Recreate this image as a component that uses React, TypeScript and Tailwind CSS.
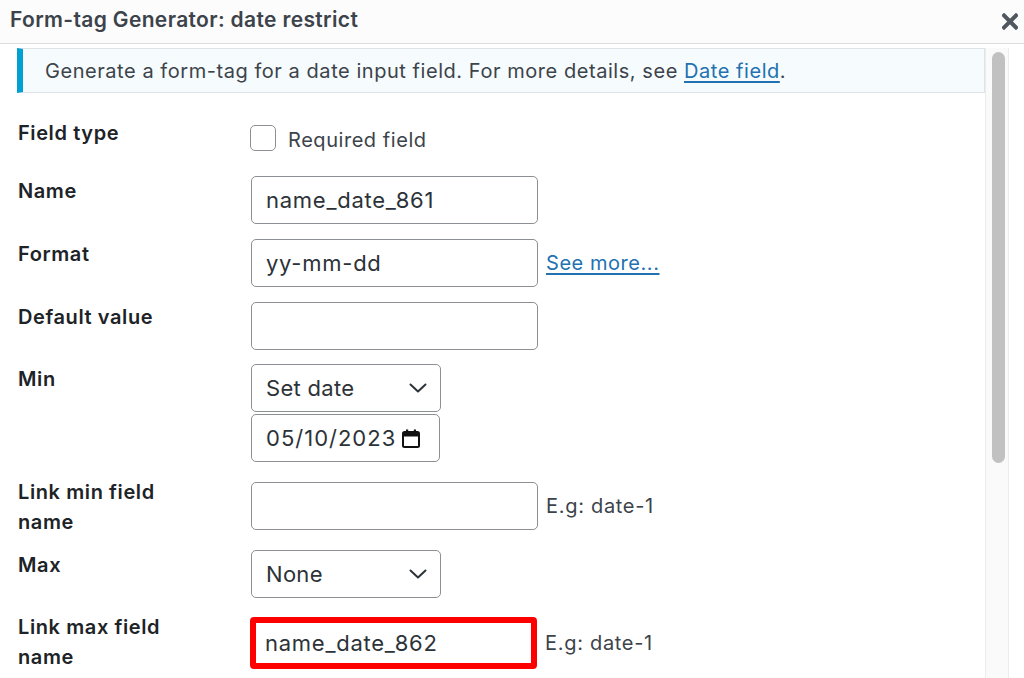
import React from "react";

const font = { fontFamily: "Inter, 'Noto Sans', sans-serif" };

function Chevron() {
  return (
    <svg width="18" height="10" viewBox="0 0 18 10" className="shrink-0">
      <path d="M1.5 1.5 L9 8.5 L16.5 1.5" fill="none" stroke="#2c3338" strokeWidth="2" strokeLinecap="round" strokeLinejoin="round" />
    </svg>
  );
}

function CalendarIcon() {
  return (
    <svg width="18" height="19" viewBox="0 0 18 19" className="shrink-0">
      <rect x="1" y="3" width="16" height="15" rx="1.5" fill="none" stroke="#111" strokeWidth="2" />
      <rect x="1" y="3" width="16" height="4.5" fill="#111" />
      <rect x="4" y="0.5" width="2.2" height="4" fill="#111" />
      <rect x="11.8" y="0.5" width="2.2" height="4" fill="#111" />
    </svg>
  );
}

function Label({ children, className = "" }: { children: React.ReactNode; className?: string }) {
  return (
    <div className={"w-[233px] shrink-0 text-[20px] font-semibold leading-[30px] tracking-[0.6px] text-[#1d2327] " + className}>
      {children}
    </div>
  );
}

function TextBox({ value }: { value?: string }) {
  return (
    <div className="flex h-[48px] w-[287px] items-center rounded-[5px] border border-[#8c8f94] bg-white pl-[14px] text-[22px] tracking-[0.75px] text-[#2c3338]">
      {value}
    </div>
  );
}

function SelectBox({ value }: { value: string }) {
  return (
    <div className="flex h-[48px] w-[190px] items-center justify-between rounded-[5px] border border-[#8c8f94] bg-white pl-[14px] pr-[13px] text-[22px] tracking-[0.3px] text-[#2c3338]">
      <span>{value}</span>
      <Chevron />
    </div>
  );
}

function Hint({ children }: { children: React.ReactNode }) {
  return <span className="ml-[8px] text-[20px] tracking-[0.7px] text-[#3c434a]">{children}</span>;
}

export default function App() {
  return (
    <div className="h-[678px] w-[1024px] overflow-hidden bg-white" style={font}>
      <div className="flex h-[44px] items-center justify-between border-b border-[#dcdcde] bg-[#fcfcfc] pb-[3px] pl-[10px] pr-[6px]">
        <h1 className="text-[21px] font-semibold tracking-[0.35px] text-[#3c434a]">Form-tag Generator: date restrict</h1>
        <svg width="16" height="17" viewBox="0 0 16 17" className="mt-[2px]">
          <path d="M2 2.5 L14 14.5 M14 2.5 L2 14.5" stroke="#50575e" strokeWidth="4" strokeLinecap="square" />
        </svg>
      </div>
      <div className="flex">
        <div className="w-[985px] shrink-0 pl-[17px] pt-[4px]">
          <div className="flex h-[45px] items-center border-y border-r border-l-[6px] border-y-[#dde3e6] border-r-[#dde3e6] border-l-[#00a0d2] bg-[#f6fbfd] pl-[22px] text-[20px] tracking-[0.55px] text-[#3c434a]">
            <span>
              Generate a form-tag for a date input field. For more details, see{" "}
              <a className="text-[#2271b1] underline underline-offset-[3px]">Date field</a>.
            </span>
          </div>

          <div className="flex flex-col pl-[1px]">
            <div className="mt-[25px] flex items-start">
              <Label>Field type</Label>
              <div className="ml-[-1px] mt-[7px] flex h-[26px] items-center">
                <div className="h-[26px] w-[26px] rounded-[5px] border border-[#8c8f94] bg-white" />
                <span className="ml-[12px] mt-[4px] text-[20px] leading-[26px] tracking-[0.55px] text-[#3c434a]">Required field</span>
              </div>
            </div>

            <div className="mt-[25px] flex items-start">
              <Label>Name</Label>
              <TextBox value="name_date_861" />
            </div>

            <div className="mt-[15px] flex items-start">
              <Label>Format</Label>
              <div className="flex items-center">
                <TextBox value="yy-mm-dd" />
                <a className="ml-[8px] text-[20px] tracking-[0.55px] text-[#2271b1] underline underline-offset-[3px]">See more...</a>
              </div>
            </div>

            <div className="mt-[15px] flex items-start">
              <Label>Default value</Label>
              <TextBox />
            </div>

            <div className="mt-[14px] flex items-start">
              <Label>Min</Label>
              <div className="flex flex-col gap-[2px]">
                <SelectBox value="Set date" />
                <div className="flex h-[48px] w-[189px] items-center rounded-[5px] border border-[#8c8f94] bg-white pl-[14px] text-[22px] tracking-[1px] text-[#2c3338]">
                  <span>05/10/2023</span>
                  <span className="ml-[6px] flex"><CalendarIcon /></span>
                </div>
              </div>
            </div>

            <div className="mt-[20px] flex items-start">
              <Label className="-mt-[5px]">
                Link min field
                <br />
                name
              </Label>
              <div className="flex items-center">
                <TextBox />
                <Hint>E.g: date-1</Hint>
              </div>
            </div>

            <div className="mt-[13px] flex items-start">
              <Label>Max</Label>
              <SelectBox value="None" />
            </div>

            <div className="mt-[19px] flex items-start">
              <Label className="-mt-[5px]">
                Link max field
                <br />
                name
              </Label>
              <div className="flex items-center">
                <div className="ml-[-1px] flex h-[52px] w-[287px] items-center rounded-[4px] border-[6px] border-[#ff0000] bg-white pl-[9px] text-[22px] tracking-[0.75px] text-[#2c3338]">
                  name_date_862
                </div>
                <Hint>E.g: date-1</Hint>
              </div>
            </div>
          </div>
        </div>
        <div className="mt-[4px] h-[640px] w-[24px] shrink-0 border-x border-[#ececec] bg-[#fafafa] pl-[6px] pt-[4px]">
          <div className="h-[411px] w-[13px] rounded-full bg-[#c1c1c1]" />
        </div>
      </div>
    </div>
  );
}
